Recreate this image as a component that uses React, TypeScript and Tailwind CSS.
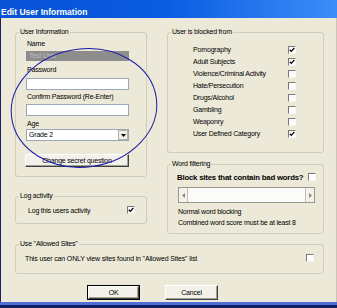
import React from "react";

function Check({ checked }: { checked?: boolean }) {
  return (
    <span className="inline-flex w-[8px] h-[8px] shrink-0 items-center justify-center bg-white border border-t-[#7a7a7a] border-l-[#7a7a7a] border-b-[#f4f4f4] border-r-[#f4f4f4]">
      {checked && (
        <svg width="6" height="6" viewBox="0 0 6 6">
          <path d="M0.7 2.7 L2.3 4.4 L5.3 1.0" stroke="#000" strokeWidth="1.3" fill="none" />
        </svg>
      )}
    </span>
  );
}

function Group({
  title,
  className,
  children,
}: {
  title: string;
  className?: string;
  children?: React.ReactNode;
}) {
  return (
    <fieldset className={`border border-[#cfcdbf] rounded-[3px] min-w-0 flex flex-col ${className ?? ""}`}>
      <legend className="ml-[3px] px-[1px] text-[7px] leading-[8px]">{title}</legend>
      {children}
    </fieldset>
  );
}

function Btn({ label, def, className }: { label: string; def?: boolean; className?: string }) {
  const inner = (
    <div className="h-full w-full border border-t-white border-l-white border-r-[#404040] border-b-[#404040] bg-[#f2f1ea] shadow-[inset_-1px_-1px_0_#a3a196] flex items-center justify-center text-[7px] leading-[8px]">
      {label}
    </div>
  );
  if (def) {
    return <div className={`border border-black ${className ?? ""}`}>{inner}</div>;
  }
  return <div className={className}>{inner}</div>;
}

const blocked: [string, boolean][] = [
  ["Pornography", true],
  ["Adult Subjects", true],
  ["Violence/Criminal Activity", false],
  ["Hate/Persecution", false],
  ["Drugs/Alcohol", false],
  ["Gambling", false],
  ["Weaponry", false],
  ["User Defined Category", true],
];

export default function App() {
  return (
    <div className="relative w-[337px] h-[308px] overflow-hidden bg-[#ece9d8] flex flex-col text-black font-['Liberation_Sans',Arial,sans-serif] tracking-[-0.2px]">
      {/* Title bar */}
      <div className="h-[18px] shrink-0 bg-gradient-to-r from-[#0852d6] via-[#0a5ce2] to-[#3b8df8] pl-[1px] pt-[8px]">
        <div className="text-white font-bold text-[8.5px] leading-[8px] tracking-[0px]">Edit User Information</div>
      </div>

      {/* Body */}
      <div className="flex-1 flex flex-col pl-[14px] pt-[10px] border-l border-[#14245e] border-r border-r-[#c9c6b8]">
        <div className="flex gap-[20px]">
          {/* Left column */}
          <div className="flex flex-col w-[132px]">
            <Group title="User Information" className="h-[149px]">
              <div className="flex flex-col pl-[10px] text-[7px] leading-[8px]">
                <div className="mt-[4px] ml-[1px] h-[8px]">Name</div>
                <div className="mt-[3px] h-[10px] w-[103px] bg-[#8d8d8d] flex items-center pl-[3px] text-[#bdbdbd]">Test User</div>
                <div className="mt-[5px] ml-[1px] h-[8px]">Password</div>
                <div className="mt-[4px] h-[12px] w-[103px] bg-white border border-[#9aa7b6]" />
                <div className="mt-[3px] ml-[1px] h-[8px]">Confirm Password (Re-Enter)</div>
                <div className="mt-[3px] h-[12px] w-[103px] bg-white border border-[#9aa7b6]" />
                <div className="mt-[4px] ml-[1px] h-[8px]">Age</div>
                <div className="mt-[1px] h-[12px] w-[103px] bg-white border border-[#9aa7b6] flex items-center">
                  <span className="flex-1 pl-[2px]">Grade 2</span>
                  <span className="w-[10px] h-[10px] bg-[#f0efe8] border border-[#b4b2a6] flex items-center justify-center">
                    <svg width="5" height="3" viewBox="0 0 5 3">
                      <path d="M0 0 L5 0 L2.5 3 Z" fill="#000" />
                    </svg>
                  </span>
                </div>
                <Btn label="Change secret question" className="mt-[13px] -ml-[1px] h-[13px] w-[104px]" />
              </div>
            </Group>
            <Group title="Log activity" className="mt-[15px] h-[32px]">
              <div className="mt-[6px] flex items-center pl-[12px] pr-[11px] text-[7px] leading-[8px]">
                <span>Log this users activity</span>
                <span className="ml-auto">
                  <Check checked />
                </span>
              </div>
            </Group>
          </div>

          {/* Right column */}
          <div className="flex flex-col w-[157px]">
            <Group title="User is blocked from" className="h-[125px]">
              <div className="mt-[8px] flex flex-col pl-[25px] text-[7px] leading-[8px]">
                {blocked.map(([name, on]) => (
                  <div key={name} className="h-[12px] flex items-center">
                    <span className="w-[95px]">{name}</span>
                    <Check checked={on} />
                  </div>
                ))}
              </div>
            </Group>
            <Group title="Word filtering" className="mt-[7px] h-[74px]">
              <div className="flex flex-col pl-[9px] pr-[7px] text-[7px] leading-[8px]">
                <div className="mt-[6px] h-[8px] flex items-center">
                  <span className="font-bold text-[7.8px] leading-[8px]">Block sites that contain bad words?</span>
                  <span className="ml-auto">
                    <Check />
                  </span>
                </div>
                <div className="mt-[5px] ml-[1px] h-[16px] w-[137px] shrink-0 flex border border-[#9a988e] bg-[#fbfbf9]">
                  <div className="w-[9px] h-full border-r border-[#c2c0b5] bg-[#f3f2ec] flex items-center justify-center">
                    <svg width="3" height="5" viewBox="0 0 3 5">
                      <path d="M3 0 L0 2.5 L3 5 Z" fill="#8a887e" />
                    </svg>
                  </div>
                  <div className="flex-1" />
                  <div className="w-[9px] h-full border-l border-[#c2c0b5] bg-[#f3f2ec] flex items-center justify-center">
                    <svg width="3" height="5" viewBox="0 0 3 5">
                      <path d="M0 0 L3 2.5 L0 5 Z" fill="#8a887e" />
                    </svg>
                  </div>
                </div>
                <div className="mt-[5px] ml-[1px] h-[8px]">Normal word blocking</div>
                <div className="mt-[3px] ml-[1px] h-[8px]">Combined word score must be at least 8</div>
              </div>
            </Group>
          </div>
        </div>

        <Group title={'Use "Allowed Sites"'} className="mt-[6px] w-[309px] h-[34px]">
          <div className="mt-[6px] flex items-center pl-[9px] pr-[9px] text-[7px] leading-[8px]">
            <span className="tracking-[-0.15px]">This user can ONLY view sites found in "Allowed Sites"  list</span>
            <span className="ml-auto">
              <Check />
            </span>
          </div>
        </Group>

        <div className="mt-[11px] flex gap-[25px] pl-[72px]">
          <Btn label="OK" def className="h-[15px] w-[53px]" />
          <Btn label="Cancel" className="h-[15px] w-[53px]" />
        </div>
      </div>

      {/* Bottom frame */}
      <div className="h-[3px] shrink-0 bg-[#4d6fd4]" />
      <div className="h-[3px] shrink-0 bg-[#101d63]" />

      {/* Hand-drawn annotation ellipse */}
      <svg className="absolute inset-0 pointer-events-none" width="337" height="308" viewBox="0 0 337 308">
        <ellipse cx="84" cy="108" rx="73" ry="59" transform="rotate(-8 84 108)" fill="none" stroke="#1c1ca8" strokeWidth="1" />
      </svg>
    </div>
  );
}
